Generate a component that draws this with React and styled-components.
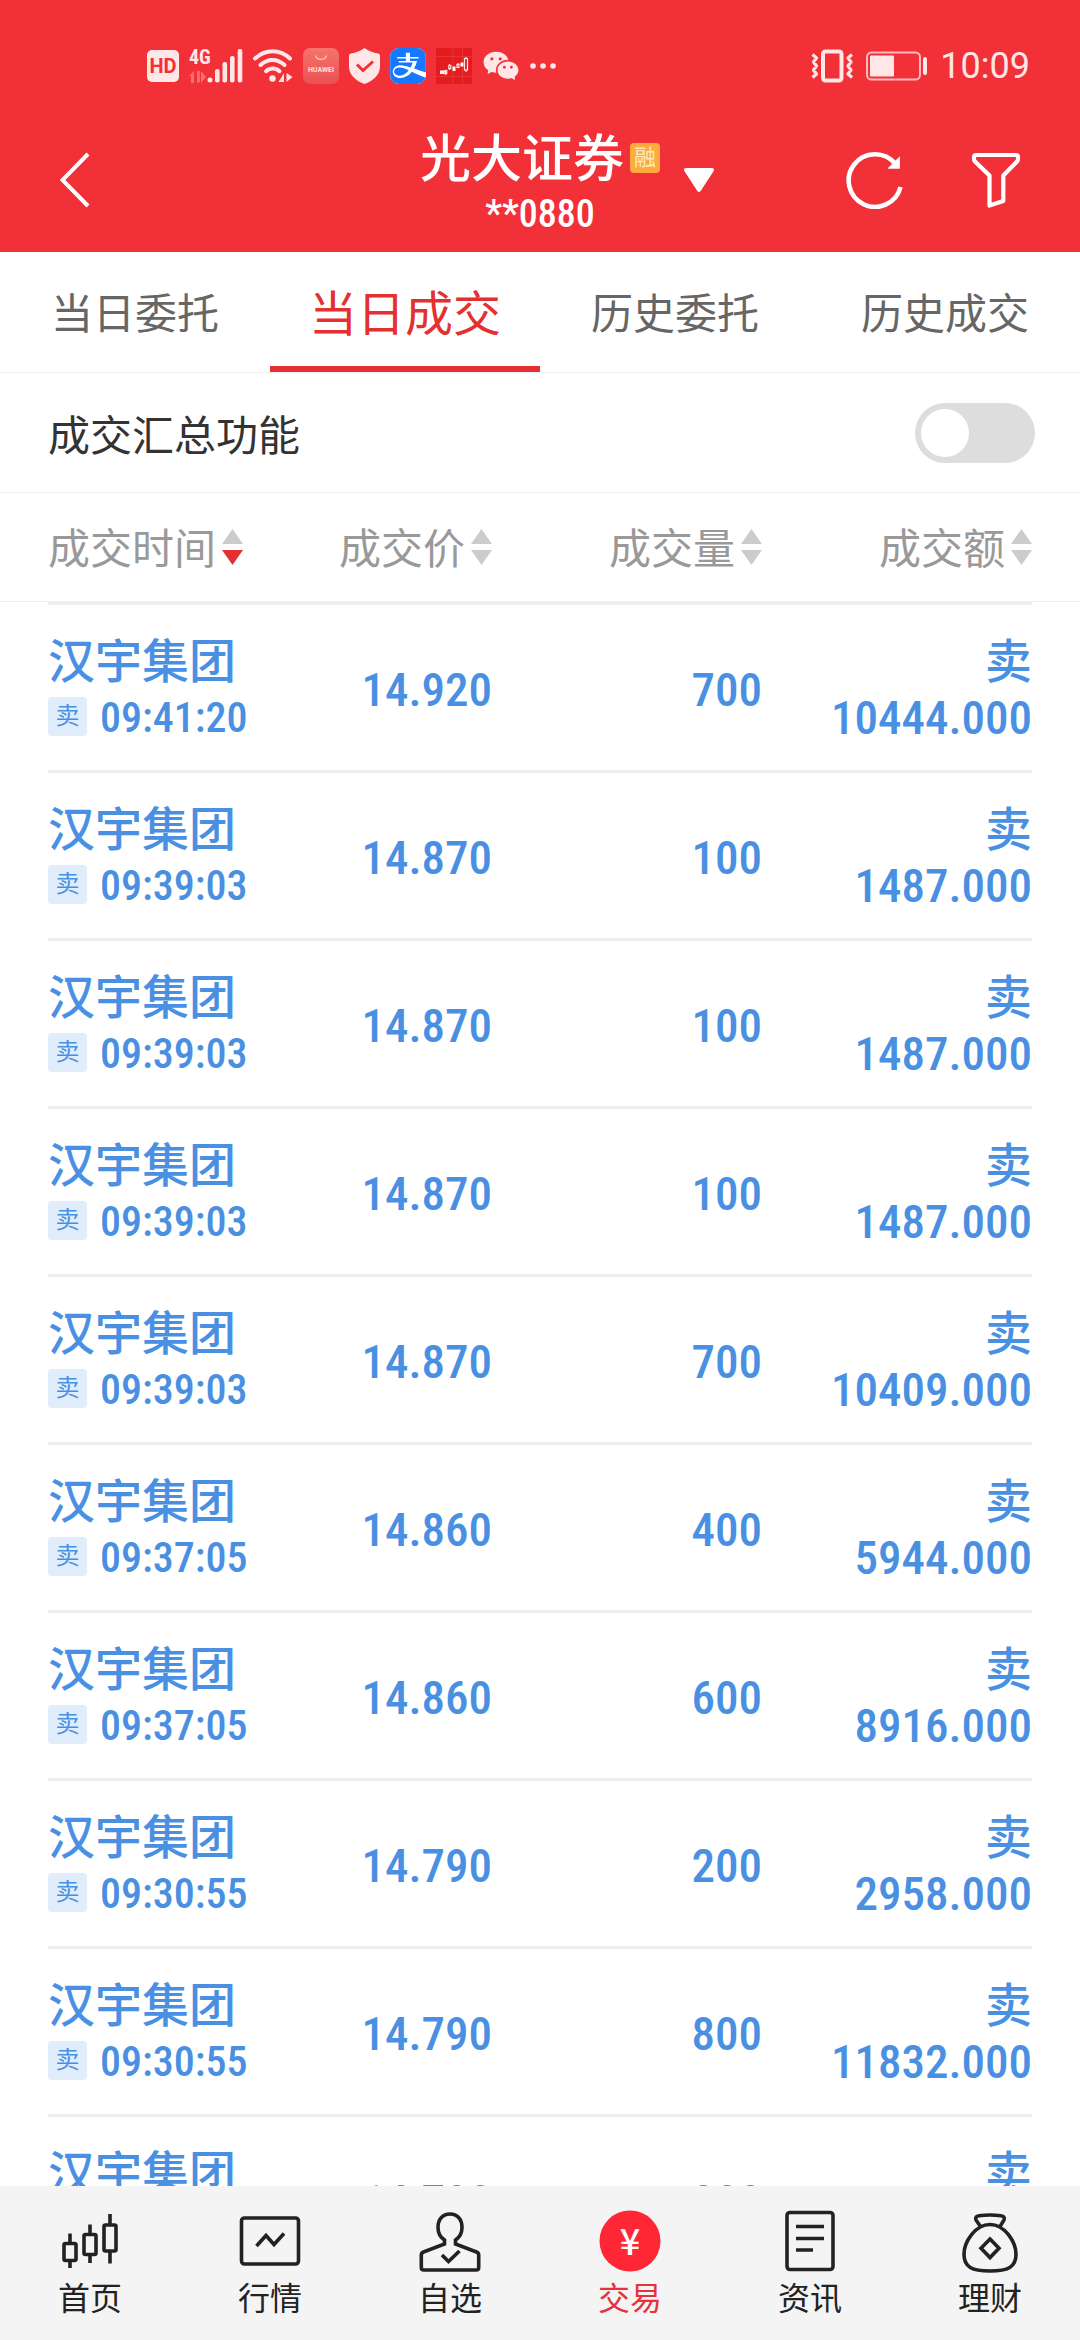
import React, { useState } from 'react';
import styled, { createGlobalStyle } from 'styled-components';
import { SiAlipay } from 'react-icons/si';
import { RiWechatFill } from 'react-icons/ri';

const colors = {
  brand: '#f23038',
  accent: '#e33030',
  tint: '#ffe6e7',
  sell: '#4a90e2',
  sellBg: '#e1edfb',
  line: '#eeeeee',
  text: '#333333',
  nav: '#222222',
};

const fonts = {
  cjk: 'Roboto, "Noto Sans CJK SC", sans-serif',
  digits: '"Roboto Condensed", Roboto, "Noto Sans CJK SC", sans-serif',
};

const GlobalStyle = createGlobalStyle`
  * {
    box-sizing: border-box;
  }

  body {
    margin: 0;
    background: #fff;
    font-family: ${fonts.cjk};
  }

  button {
    padding: 0;
    border: 0;
    background: none;
    font: inherit;
    color: inherit;
    cursor: pointer;
  }
`;

const Page = styled.div`
  display: flex;
  flex-direction: column;
  height: 100vh;
`;

const Header = styled.header`
  background: ${colors.brand};
  color: #fff;
`;

const StatusBar = styled.div`
  display: flex;
  align-items: center;
  justify-content: space-between;
  height: 108px;
  padding: 24px 50px 0 147px;
  color: ${colors.tint};
`;

const StatusGroup = styled.div`
  display: flex;
  align-items: center;
  gap: ${({ $gap }) => $gap};

  svg {
    display: block;
    overflow: visible;
  }
`;

const Clock = styled.time`
  font-size: 36px;
  line-height: 40px;
`;

const AlipayTile = styled.span`
  display: flex;
  overflow: hidden;
  border-radius: 9px;
  background: #fff;
  color: #1677ff;
`;

const TitleBar = styled.div`
  display: grid;
  grid-template-columns: 1fr auto 1fr;
  align-items: center;
  height: 144px;
  padding: 0 60px;
`;

const IconButton = styled.button`
  display: flex;
  justify-self: start;
`;

const Account = styled.div`
  display: flex;
  flex-direction: column;
  align-items: center;
  padding-top: 10px;
`;

const AccountName = styled.h1`
  display: flex;
  align-items: center;
  gap: 6px;
  margin: 0;
  font-size: 51px;
  font-weight: 500;
  line-height: 58px;
`;

const MarginTag = styled.span`
  width: 30px;
  height: 30px;
  margin-bottom: 4px;
  border-radius: 4px;
  background: #fdab3d;
  color: #ffe9b8;
  font-size: 22px;
  font-weight: 400;
  line-height: 29px;
  text-align: center;
`;

const AccountNumber = styled.span`
  font-family: ${fonts.digits};
  font-size: 38px;
  font-weight: 500;
  line-height: 50px;
`;

const Actions = styled.div`
  display: flex;
  align-items: center;
  padding-left: 24px;
  gap: 68px;
`;

const Switcher = styled(IconButton)`
  margin-right: auto;
`;

const Tabs = styled.nav`
  display: grid;
  grid-template-columns: repeat(4, 1fr);
  height: 121px;
  border-bottom: 1px solid ${colors.line};
`;

const Tab = styled.button`
  && {
    padding-top: 2px;
    border-bottom: 6px solid ${({ $active }) => ($active ? colors.accent : 'transparent')};
    color: ${({ $active }) => ($active ? colors.accent : '#666')};
    font-size: ${({ $active }) => ($active ? '48px' : '42px')};
  }
`;

const Summary = styled.label`
  display: flex;
  align-items: center;
  justify-content: space-between;
  height: 120px;
  padding: 0 45px 0 48px;
  border-bottom: 1px solid ${colors.line};
  color: ${colors.text};
  font-size: 42px;
`;

const Toggle = styled.input`
  display: flex;
  appearance: none;
  width: 120px;
  height: 60px;
  margin: 0;
  padding: 6px;
  border-radius: 30px;
  background: ${({ checked }) => (checked ? colors.accent : '#ddd')};
  justify-content: ${({ checked }) => (checked ? 'flex-end' : 'flex-start')};

  &::before {
    content: '';
    width: 48px;
    height: 48px;
    border-radius: 50%;
    background: #fff;
  }
`;

const ListArea = styled.main`
  flex: 1;
  min-height: 0;
  overflow: hidden;
`;

const Table = styled.table`
  display: block;
`;

const TableHead = styled.thead`
  display: block;
  padding: 0 48px;
  border-bottom: 1px solid ${colors.line};
`;

const TableBody = styled.tbody`
  display: block;
  padding: 0 48px;
`;

const HeadRow = styled.tr`
  display: grid;
  grid-template-columns: 37fr 37fr 45fr 45fr;
  align-items: center;
  height: 108px;
`;

const HeadCell = styled.th`
  display: flex;
  justify-content: ${({ $start }) => ($start ? 'flex-start' : 'flex-end')};
  padding: 0;
  color: #999;
  font-size: 42px;
  font-weight: 400;
`;

const SortButton = styled.button`
  && {
    display: flex;
    align-items: center;
    gap: 6px;
    white-space: nowrap;
  }
`;

const SortLabel = styled.span`
  padding-bottom: 4px;
`;

const DealRow = styled(HeadRow)`
  height: 168px;
  padding-top: 4px;
  border-top: 3px solid ${colors.line};
  color: ${colors.sell};
`;

const Cell = styled.td`
  padding: 0;
  font-family: ${fonts.digits};
  font-size: 47px;
  font-weight: 500;
  line-height: 56px;
  text-align: right;
  white-space: nowrap;
`;

const StockCell = styled(Cell)`
  text-align: left;
`;

const Line = styled.div`
  display: flex;
  align-items: center;
  justify-content: ${({ $end }) => ($end ? 'flex-end' : 'flex-start')};
  height: 56px;
  gap: 13px;
`;

const SideTag = styled.span`
  width: 39px;
  height: 39px;
  margin-bottom: 3px;
  border-radius: 4px;
  background: ${colors.sellBg};
  font-size: 24px;
  font-weight: 400;
  line-height: 38px;
  text-align: center;
`;

const Time = styled.time`
  font-size: 42px;
`;

const BottomNav = styled.nav`
  display: grid;
  grid-template-columns: repeat(6, 1fr);
  height: 154px;
  background: #f4f4f4;
`;

const NavLink = styled.a`
  display: flex;
  flex-direction: column;
  align-items: center;
  padding-top: 24px;
  gap: 5px;
  color: ${({ $active }) => ($active ? '#e9303c' : colors.nav)};
  font-size: 32px;
  line-height: 40px;
  text-decoration: none;
`;

const NavIcon = styled.svg.attrs({
  width: 64,
  height: 64,
  viewBox: '0 0 64 64',
  fill: 'none',
  stroke: 'currentColor',
  strokeWidth: 3.6,
  'aria-hidden': true,
})`
  display: block;
`;

const HdIcon = () => (
  <svg width="32" height="32" viewBox="0 0 32 32">
    <rect width="32" height="32" rx="5" fill={colors.tint} />
    <text x="16" y="23" textAnchor="middle" fontFamily="Roboto, sans-serif" fontWeight="700" fontSize="20" fill={colors.brand}>HD</text>
  </svg>
);

const SignalIcon = () => (
  <svg width="54" height="34" viewBox="0 0 54 34" fill="currentColor">
    <text x="0" y="15" fontFamily={fonts.digits} fontWeight="700" fontSize="20">4G</text>
    <g opacity="0.35">
      <path d="M5 22v12h-3v-7h-2zM8 22v12l3-1v-11zM12 22v12l5-6z" />
    </g>
    <circle cx="21" cy="31" r="2.5" />
    <rect x="26" y="20" width="4.600" height="13.500" rx="2" />
    <rect x="33.500" y="13" width="4.600" height="20.500" rx="2" />
    <rect x="41" y="7" width="4.600" height="26.500" rx="2" />
    <rect x="48.700" y="0" width="4.600" height="33.500" rx="2" />
  </svg>
);

const WifiIcon = () => (
  <svg width="40" height="34" viewBox="0 0 40 34" fill="none" stroke="currentColor" strokeWidth="4" strokeLinecap="round">
    <path d="M2 9.500C12.500-.2 27-.2 37 9.500" />
    <path d="M7.500 16c7-6.800 17-6.800 24 0" />
    <path d="M13 22.200c4-3.700 9.500-3.700 13.500 0" />
    <circle cx="19.500" cy="29.500" r="3.200" fill="currentColor" stroke="none" />
    <path d="M31 24v9h-5.500zM33.500 24v9l6-5z" fill="currentColor" stroke="none" />
  </svg>
);

const HuaweiIcon = () => (
  <svg width="36" height="36" viewBox="0 0 36 36">
    <defs>
      <linearGradient id="huawei" x1="0" y1="0" x2="0" y2="1">
        <stop offset="0" stopColor="#f6756a" />
        <stop offset="1" stopColor="#ea5054" />
      </linearGradient>
    </defs>
    <rect width="36" height="36" rx="7" fill="url(#huawei)" />
    <path d="M12.500 7.500a5.800 5.800 0 0 0 11 0" fill="none" stroke="#fbc4bf" strokeWidth="1.200" />
    <text x="18" y="24" textAnchor="middle" fontFamily="Roboto, sans-serif" fontWeight="700" fontSize="7" fill="#ffe0dd">HUAWEI</text>
  </svg>
);

const ShieldIcon = () => (
  <svg width="31" height="36" viewBox="0 0 31 36">
    <path d="M15.500 0c4 3 8.500 4.800 13.500 5.400 1.200.2 2 1 2 2.200v11c0 8.500-7 14.500-15.500 17.400C7 33.100 0 27.100 0 18.600v-11c0-1.200.8-2 2-2.200C7 4.800 11.500 3 15.500 0z" fill={colors.tint} />
    <path d="M8 16.500l6 6 10-9" fill="none" stroke={colors.brand} strokeWidth="3" />
  </svg>
);

const CandleTileIcon = () => (
  <svg width="36" height="36" viewBox="0 0 36 36">
    <rect width="36" height="36" fill="#e51c1f" />
    <path d="M0 8.500h36M0 28.500h36M17 0v36M26.500 0v36" stroke="#ea3a39" strokeWidth=".8" />
    <g fill="none" stroke="#ffe6e7" strokeWidth="1.200">
      <path d="M9.500 22v5M13.500 16v6M22 15v5M30 9v15" />
      <rect x="8.800" y="22.500" width="2" height="3" />
      <rect x="12.800" y="17.500" width="2" height="3" fill="#e11b1d" />
      <rect x="21" y="16.500" width="2" height="3" fill="#e11b1d" />
      <rect x="28.500" y="10.500" width="3" height="11.500" fill="#e11b1d" />
    </g>
    <path d="M4 22.500h4v3.500h-4zM16.500 18.500h3v4.500h-3zM24.500 14.500h3v4h-3z" fill="#fff" />
  </svg>
);

const MoreIcon = () => (
  <svg width="26" height="6" viewBox="0 0 26 6" fill="currentColor">
    <circle cx="3" cy="3" r="2.800" />
    <circle cx="13" cy="3" r="2.800" />
    <circle cx="23" cy="3" r="2.800" />
  </svg>
);

const VibrateIcon = () => (
  <svg width="43" height="34" viewBox="0 0 43 34" fill="none" stroke="currentColor" strokeWidth="4">
    <rect x="12" y="2.500" width="18.500" height="29" rx="2.500" />
    <path d="M1.500 5.500l4 3.500-3 4 3 4-3 4 3 4-4 3.500M41 5.500L37 9l3 4-3 4 3 4-3 4 4 3.500" strokeWidth="3.200" strokeLinejoin="round" />
  </svg>
);

const BatteryIcon = () => (
  <svg width="62" height="30" viewBox="0 0 62 30">
    <rect x="1" y="1.500" width="53" height="27" rx="4.500" fill="none" stroke="#ffb9bc" strokeWidth="2" />
    <rect x="4" y="4.500" width="24" height="21" rx="1" fill={colors.tint} />
    <rect x="57" y="6" width="4" height="18" rx="2" fill={colors.tint} />
  </svg>
);

const BackIcon = () => (
  <svg width="30" height="56" viewBox="0 0 30 56" fill="none" stroke="currentColor" strokeWidth="4">
    <path d="M28 2L2.500 28 28 54" />
  </svg>
);

const CaretIcon = () => (
  <svg width="30" height="24" viewBox="0 0 30 24" fill="currentColor">
    <path d="M2 0h26c2 0 2.500 1.800 1.500 3.200L17 22.600c-1 1.800-3 1.800-4 0L.5 3.200C-.5 1.800 0 0 2 0z" />
  </svg>
);

const RefreshIcon = () => (
  <svg width="58" height="58" viewBox="0 0 58 58" fill="none" stroke="currentColor" strokeWidth="4.600">
    <path d="M54.500 36A26.300 26.300 0 1 1 49 12.500" />
    <path d="M53.500 6v11.300h-11.300z" fill="currentColor" strokeWidth=".8" strokeLinejoin="round" />
  </svg>
);

const FilterIcon = () => (
  <svg width="48" height="56" viewBox="0 0 48 56" fill="none" stroke="currentColor" strokeWidth="4.200" strokeLinejoin="round">
    <path d="M4 3h40c1.500 0 2 .8 2 2v2.200c0 1-.4 1.800-1.200 2.600L31.300 23.500V49L17.500 53.500v-30L3.200 9.800C2.400 9 2 8.200 2 7.200V5c0-1.200.5-2 2-2z" />
  </svg>
);

const SortIcon = ({ desc }) => (
  <svg width="21" height="36" viewBox="0 0 21 36" fill="#ccc">
    <path d="M10.500 0L21 15H0z" />
    <path d="M10.500 36L21 21H0z" fill={desc ? '#e33030' : '#ccc'} />
  </svg>
);

const tabs = ['当日委托', '当日成交', '历史委托', '历史成交'];

const headings = ['成交时间', '成交价', '成交量', '成交额'];

const deals = [
  { time: '09:41:20', price: '14.920', volume: 700, amount: '10444.000' },
  { time: '09:39:03', price: '14.870', volume: 100, amount: '1487.000' },
  { time: '09:39:03', price: '14.870', volume: 100, amount: '1487.000' },
  { time: '09:39:03', price: '14.870', volume: 100, amount: '1487.000' },
  { time: '09:39:03', price: '14.870', volume: 700, amount: '10409.000' },
  { time: '09:37:05', price: '14.860', volume: 400, amount: '5944.000' },
  { time: '09:37:05', price: '14.860', volume: 600, amount: '8916.000' },
  { time: '09:30:55', price: '14.790', volume: 200, amount: '2958.000' },
  { time: '09:30:55', price: '14.790', volume: 800, amount: '11832.000' },
  { time: '09:30:55', price: '14.790', volume: 800, amount: '11832.000' },
];

const navItems = [
  {
    label: '首页',
    icon: (
      <>
        <rect x="6" y="33.500" width="12" height="17" rx="1.500" />
        <rect x="26" y="24.500" width="12" height="20" rx="1.500" />
        <rect x="46" y="15" width="12" height="26" rx="1.500" />
        <path d="M12 23.500v10M12 50v8M32 14.500v10M32 45v8M52 4v11M52 42v11.500" />
      </>
    ),
  },
  {
    label: '行情',
    icon: (
      <>
        <rect x="3.500" y="8" width="57" height="46" rx="3" />
        <path d="M18.500 36L28 25.500l8 9L46 23.500" />
      </>
    ),
  },
  {
    label: '自选',
    icon: (
      <>
        <path d="M26.500 30v4L5.500 42c-1.500.6-2.200 1.500-2.200 3v12.500c0 1.800.7 2.500 2.500 2.500h52.400c1.800 0 2.500-.7 2.500-2.500V45c0-1.500-.7-2.400-2.200-3l-21-8v-4c4.500-3 6.500-6.500 6.500-12.500C44 9 39 4 32 4S20 9 20 17.500c0 6 2 9.500 6.500 12.500z" />
        <path d="M24 45l6.500 6.500L41.500 41" />
      </>
    ),
  },
  {
    label: '交易',
    active: true,
    icon: (
      <>
        <circle cx="32" cy="31" r="30.500" fill="#ff2636" stroke="none" />
        <text x="32" y="45" textAnchor="middle" fontFamily='"Noto Sans CJK SC", sans-serif' fontWeight="500" fontSize="36" fill="#fff" stroke="none">¥</text>
      </>
    ),
  },
  {
    label: '资讯',
    icon: (
      <>
        <rect x="9" y="2.500" width="46" height="57" rx="3" />
        <path d="M18 16.500h28M18 28.500h28M18 40h17" />
      </>
    ),
  },
  {
    label: '理财',
    icon: (
      <>
        <path d="M22.500 16.500l-4.500-6.500c-1-2.800.5-3.800 3-4.200 7-1 15-1 22 0 2.500.4 4 1.400 3 4.200L42 16.500" />
        <path d="M32 14.500C17.500 14.500 6 31.500 6 44.500 6 57 14 61 32 61s26-4 26-16.500c0-13-11.500-30-26-30z" />
        <path d="M32 29l9 9.300-9 9.300-9-9.300z" />
      </>
    ),
  },
];

const App = () => {
  const [tab, setTab] = useState(1);
  const [summary, setSummary] = useState(false);
  const [sorted, setSorted] = useState(0);

  return (
    <Page>
      <GlobalStyle />
      <Header>
        <StatusBar>
          <StatusGroup $gap="10px">
            <HdIcon />
            <SignalIcon />
            <WifiIcon />
            <HuaweiIcon />
            <ShieldIcon />
            <AlipayTile><SiAlipay size={36} /></AlipayTile>
            <CandleTileIcon />
            <RiWechatFill size={38} />
            <MoreIcon />
          </StatusGroup>
          <StatusGroup $gap="12px">
            <VibrateIcon />
            <BatteryIcon />
            <Clock>10:09</Clock>
          </StatusGroup>
        </StatusBar>
        <TitleBar>
          <IconButton aria-label="返回"><BackIcon /></IconButton>
          <Account>
            <AccountName>
              光大证券
              <MarginTag>融</MarginTag>
            </AccountName>
            <AccountNumber>**0880</AccountNumber>
          </Account>
          <Actions>
            <Switcher aria-label="切换账户"><CaretIcon /></Switcher>
            <IconButton aria-label="刷新"><RefreshIcon /></IconButton>
            <IconButton aria-label="筛选"><FilterIcon /></IconButton>
          </Actions>
        </TitleBar>
      </Header>

      <Tabs>
        {tabs.map((label, i) => (
          <Tab key={label} $active={i === tab} onClick={() => setTab(i)}>{label}</Tab>
        ))}
      </Tabs>

      <Summary>
        成交汇总功能
        <Toggle type="checkbox" role="switch" checked={summary} onChange={() => setSummary(!summary)} />
      </Summary>

      <ListArea>
        <Table>
          <TableHead>
            <HeadRow>
              {headings.map((label, i) => (
                <HeadCell key={label} scope="col" $start={i === 0}>
                  <SortButton onClick={() => setSorted(i)}>
                    <SortLabel>{label}</SortLabel>
                    <SortIcon desc={i === sorted} />
                  </SortButton>
                </HeadCell>
              ))}
            </HeadRow>
          </TableHead>
          <TableBody>
            {deals.map((deal, i) => (
              <DealRow key={i}>
                <StockCell>
                  <Line>汉宇集团</Line>
                  <Line>
                    <SideTag>卖</SideTag>
                    <Time>{deal.time}</Time>
                  </Line>
                </StockCell>
                <Cell>{deal.price}</Cell>
                <Cell>{deal.volume}</Cell>
                <Cell>
                  <Line $end>卖</Line>
                  <Line $end>{deal.amount}</Line>
                </Cell>
              </DealRow>
            ))}
          </TableBody>
        </Table>
      </ListArea>

      <BottomNav>
        {navItems.map(({ label, icon, active }) => (
          <NavLink key={label} href="#" $active={active}>
            <NavIcon>{icon}</NavIcon>
            {label}
          </NavLink>
        ))}
      </BottomNav>
    </Page>
  );
};

export default App;
